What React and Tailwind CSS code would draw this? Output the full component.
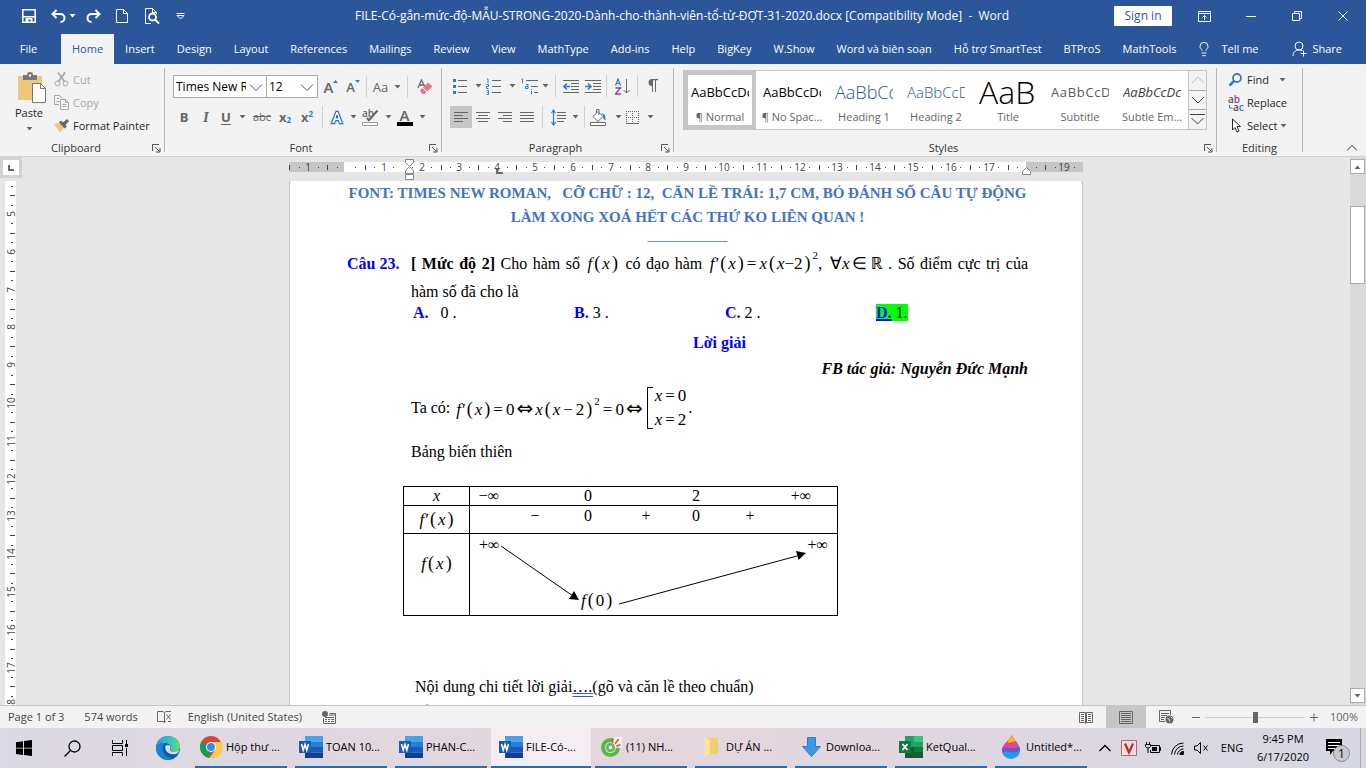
import { Lightbulb } from 'lucide-react';

const TABS = [
  'Home', 'Insert', 'Design', 'Layout', 'References', 'Mailings', 'Review', 'View', 'MathType',
  'Add-ins', 'Help', 'BigKey', 'W.Show', 'Word và biên soạn', 'Hỗ trợ SmartTest', 'BTProS', 'MathTools',
];

const STYLES = [
  { name: '¶ Normal', sample: 'AaBbCcDc', look: 'text-[13px] text-black', active: true },
  { name: '¶ No Spac...', sample: 'AaBbCcDc', look: 'text-[13px] text-black' },
  { name: 'Heading 1', sample: 'AaBbCc', look: 'text-[18px] font-light text-[#2f5496]' },
  { name: 'Heading 2', sample: 'AaBbCcD', look: 'text-[15px] font-light text-[#2f5496]' },
  { name: 'Title', sample: 'AaB', look: 'text-[32px] font-light text-black' },
  { name: 'Subtitle', sample: 'AaBbCcD', look: 'text-[13px] tracking-wider text-[#5a5a5a]' },
  { name: 'Subtle Em...', sample: 'AaBbCcDc', look: 'text-[13px] italic text-[#404040]' },
];

/* ---------- small shared pieces ---------- */

function Caret({ className = '' }) {
  return (
    <svg viewBox="0 0 7 4" className={`w-[7px] h-1 shrink-0 ${className}`} fill="currentColor">
      <path d="M0.5 0h6L3.5 3.5z" />
    </svg>
  );
}

function Svg({ w = 16, h = 16, children, className = '' }) {
  return (
    <svg width={w} height={h} viewBox={`0 0 ${w} ${h}`} fill="none" stroke="currentColor" className={`shrink-0 ${className}`}>
      {children}
    </svg>
  );
}

function IconButton({ label, children, className = 'w-[22px]' }) {
  return (
    <button type="button" aria-label={label} className={`h-[22px] shrink-0 flex items-center justify-center text-[#666] ${className}`}>
      {children}
    </button>
  );
}

function Sep({ className = '' }) {
  return <span className={`w-px h-[22px] shrink-0 bg-[#d0d0d0] ${className}`} />;
}

function Group({ label, launcher = true, className = '', children }) {
  return (
    <section className={`shrink-0 flex ${className}`}>
      <div className="flex-1 min-w-0 flex flex-col">
        <div className="flex-1">{children}</div>
        <div className="h-4 flex items-center text-[#333]">
          <span className="flex-1 text-center">{label}</span>
          {launcher && (
            <button type="button" aria-label={`${label} settings`} className="w-3 text-[#555]">
              <Svg w={9} h={9}>
                <path d="M0.5 7V0.5H7M3 3l4.5 4.5M8 4v4H4" />
              </Svg>
            </button>
          )}
        </div>
      </div>
      <span className="w-px h-[84px] bg-[#b8b8b8]" />
    </section>
  );
}

/* ---------- title bar and tabs ---------- */

function TitleBar() {
  return (
    <header className="h-8 shrink-0 flex items-center text-white text-[12px]">
      <div className="w-[250px] shrink-0 pl-[22px] flex items-center">
        <button type="button" aria-label="Save">
          <Svg w={14} h={14}>
            <path d="M0.8 0.8h12.4v12.4H0.8z" strokeWidth="1.6" />
            <path d="M1 7h12v1.5H1zM3.500 9h7v4.500h-2v-3h-2v3h-3z" fill="currentColor" stroke="none" />
          </Svg>
        </button>
        <button type="button" aria-label="Undo" className="ml-[15px] flex items-center">
          <Svg w={15} h={14}>
            <path d="M5.500 1L1.500 5l4 4M2 5h7.500a4 4 0 0 1 0 8" strokeWidth="2" />
          </Svg>
          <Caret className="ml-[3px]" />
        </button>
        <button type="button" aria-label="Redo" className="ml-2.5">
          <Svg w={15} h={14}>
            <path d="M9.500 1l4 4-4 4M13 5H5.500a4 4 0 0 0 0 8" strokeWidth="2" />
          </Svg>
        </button>
        <button type="button" aria-label="New" className="ml-[15px]">
          <Svg w={12} h={14}>
            <path d="M0.5 0.5h7l4 4v9H0.500zM7.500 0.500v4h4" />
          </Svg>
        </button>
        <button type="button" aria-label="Print preview" className="ml-[17px]">
          <Svg w={15} h={16}>
            <path d="M6 15.500H0.500v-15h7l4 4V6M7.500 0.500v4h4" />
            <circle cx="7.500" cy="9" r="3.500" strokeWidth="1.800" />
            <path d="M10 11.500l4 4" strokeWidth="2" />
          </Svg>
        </button>
        <button type="button" aria-label="Customize toolbar" className="ml-4">
          <Svg w={9} h={8}>
            <path d="M0.500 1.500h8" />
            <path d="M1 3.500h7L4.500 7z" />
          </Svg>
        </button>
      </div>
      <h1 className="flex-1 min-w-0 text-center whitespace-pre">
        FILE-Có-gắn-mức-độ-MẪU-STRONG-2020-Dành-cho-thành-viên-tổ-từ-ĐỢT-31-2020.docx [Compatibility Mode]  -  Word
      </h1>
      <div className="w-[252px] shrink-0 flex items-center">
        <button type="button" className="w-[58px] h-5 shrink-0 rounded-[1px] bg-white text-[#2b579a]">Sign in</button>
        <button type="button" aria-label="Ribbon display options" className="ml-[26px]">
          <Svg w={13} h={11}>
            <path d="M0.500 0.500h12v10H0.500zM0.500 2.500h12M6.500 9V4.500M4.500 6.500l2-2 2 2" />
          </Svg>
        </button>
        <button type="button" aria-label="Minimize" className="ml-[35px]">
          <Svg w={10} h={10}><path d="M0 5.500h10" /></Svg>
        </button>
        <button type="button" aria-label="Restore" className="ml-9">
          <Svg w={10} h={10}><path d="M0.500 2.500h7v7h-7zM2.500 2.500v-2h7v7h-2" /></Svg>
        </button>
        <button type="button" aria-label="Close" className="ml-9">
          <Svg w={10} h={10}><path d="M0.500 0.500l9 9M9.500 0.500l-9 9" /></Svg>
        </button>
      </div>
    </header>
  );
}

function TabStrip() {
  return (
    <nav className="h-8 pt-0.5 shrink-0 flex items-stretch text-white whitespace-nowrap">
      <button type="button" className="w-[61px] pr-1 shrink-0">File</button>
      {TABS.map((t, i) => (
        <button key={t} type="button" className={`shrink-0 px-[11px] ${i === 0 ? 'bg-[#f3f3f3] text-[#2b579a]' : ''}`}>
          {t}
        </button>
      ))}
      <button type="button" className="pl-2 flex items-center gap-2.5">
        <Lightbulb className="w-4 h-[18px]" strokeWidth={1.4} />
        Tell me
      </button>
      <button type="button" className="ml-auto pr-6 flex items-center gap-1">
        <Svg w={16} h={16}>
          <circle cx="7" cy="5" r="4" />
          <path d="M1 15c0-4 2.500-6 6-6 1.500 0 2.500 0.300 3.500 1M11.500 9.500v6M8.500 12.500h6" />
        </Svg>
        Share
      </button>
    </nav>
  );
}

/* ---------- ribbon ---------- */

function ClipboardGroup() {
  return (
    <Group label="Clipboard" className="w-[165px]">
      <div className="flex">
        <button type="button" className="w-[38px] ml-2.5 mt-1 flex flex-col items-center">
          <Svg w={29} h={31} className="ml-1">
            <path d="M1 4h24v24H1z" fill="#eec77c" stroke="none" />
            <path d="M6 3h4a3 3 0 0 1 6 0h4v5H6z" fill="#777" stroke="none" />
            <circle cx="13" cy="3.500" r="1.200" fill="#f3f3f3" stroke="none" />
            <path d="M15.500 11.500h8l5 5v14h-13z" fill="#fff" stroke="#777" />
            <path d="M23.500 11.500v5h5" stroke="#777" />
          </Svg>
          <span className="leading-5">Paste</span>
          <Caret className="mt-1 text-[#666]" />
        </button>
        <div className="ml-1.5 flex flex-col">
          <button type="button" className="h-[23px] flex items-center gap-1 text-[#a8a8a8]">
            <Svg w={15} h={15}>
              <path d="M4 0.500l6.500 9M11 0.500l-6.500 9" strokeWidth="1.800" />
              <circle cx="3.500" cy="11.500" r="2.500" />
              <circle cx="11.500" cy="11.500" r="2.500" />
            </Svg>
            Cut
          </button>
          <button type="button" className="h-[23px] flex items-center gap-1 text-[#a8a8a8]">
            <Svg w={15} h={15}>
              <path d="M5 9.500H0.500v-9h5l3 3M2.500 3.500h3M2.500 6.500h3" />
              <path d="M6.500 4.500h5l3 3v7h-8zM11.500 4.500v3h3M8.500 9.500h4M8.500 11.500h4" />
            </Svg>
            Copy
          </button>
          <button type="button" className="h-[23px] flex items-center gap-1 whitespace-nowrap">
            <Svg w={15} h={15}>
              <path d="M0 6l5-1 5 5-4 4.500z" fill="#eec77c" stroke="none" />
              <path d="M5 4.500l2-2 2 2 4-3.500 2 2-3.500 4 1.500 1.500-2.500 2z" fill="#666" stroke="none" />
            </Svg>
            Format Painter
          </button>
        </div>
      </div>
    </Group>
  );
}

function ComboBox({ label, value, className }) {
  return (
    <div className={`relative h-[23px] border border-[#ababab] bg-white text-[12px] ${className}`}>
      <select aria-label={label} defaultValue={value} className="w-full h-full pl-0.5 pr-5 appearance-none text-black text-clip">
        <option>{value}</option>
      </select>
      <svg viewBox="0 0 14 8" className="absolute right-[3px] top-2 w-3.5 h-2 pointer-events-none" fill="none" stroke="#555">
        <path d="M1 0.500l6 6 6-6" />
      </svg>
    </div>
  );
}

function FontGroup() {
  return (
    <Group label="Font" className="w-[277px] pl-2">
      <div className="h-[23px] mt-[7px] flex items-center">
        <ComboBox label="Font" value="Times New Roman" className="w-[94px]" />
        <ComboBox label="Font size" value="12" className="w-[52px] -ml-px" />
        <IconButton label="Grow font" className="w-[22px] ml-0.5">
          <span className="text-[15px] font-semibold">A</span>
          <Svg w={5} h={16}><path d="M0 4h5L2.500 1z" fill="#2b7cd3" stroke="none" /></Svg>
        </IconButton>
        <IconButton label="Shrink font" className="w-[22px]">
          <span className="text-[13px] font-semibold">A</span>
          <Svg w={5} h={16}><path d="M0 1h5L2.500 4z" fill="#2b7cd3" stroke="none" /></Svg>
        </IconButton>
        <Sep className="ml-0.5" />
        <IconButton label="Change case" className="w-10 gap-1.5 text-[13px]">Aa<Caret /></IconButton>
        <Sep />
        <IconButton label="Clear formatting" className="w-[22px] ml-1.5">
          <Svg w={16} h={16}>
            <path d="M1 9l3.500-8L8 8M2.500 6h4" strokeWidth="1.300" />
            <path d="M3 11.500l8-8 4.500 4-8 7.500H5z" fill="#e8788a" stroke="none" />
            <path d="M5.500 8.500l4.500 4.500" stroke="#fff" />
          </Svg>
        </IconButton>
      </div>
      <div className="h-[22px] mt-2 flex items-center text-[13px]">
        <IconButton label="Bold"><b>B</b></IconButton>
        <IconButton label="Italic"><i className="font-['Liberation_Serif',serif] text-[15px] font-bold">I</i></IconButton>
        <IconButton label="Underline" className="w-[33px] gap-2"><b className="underline underline-offset-2">U</b><Caret /></IconButton>
        <IconButton label="Strikethrough" className="w-6"><s className="text-[11px]">abc</s></IconButton>
        <IconButton label="Subscript"><b>x</b><span className="text-[8px] font-bold text-[#2b7cd3] self-end">2</span></IconButton>
        <IconButton label="Superscript"><b>x</b><span className="text-[8px] font-bold text-[#2b7cd3] self-start">2</span></IconButton>
        <Sep className="mx-1" />
        <IconButton label="Text effects" className="w-8 gap-1.5">
          <Svg w={14} h={15}>
            <path d="M1.500 13.500L6 1.500h2l4.500 12h-3l-1-3h-3l-1 3zM6 8h2L7 5z" stroke="#9cc3eb" strokeWidth="2.600" />
            <path d="M1.500 13.500L6 1.500h2l4.500 12h-3l-1-3h-3l-1 3zM6 8h2L7 5z" fill="#fff" stroke="#2b6cb8" />
          </Svg>
          <Caret />
        </IconButton>
        <IconButton label="Highlight colour" className="w-9 gap-1.5">
          <Svg w={17} h={18} className="overflow-visible">
            <text x="0" y="9" fontSize="10" fontWeight="600" fill="#666" stroke="none">ab</text>
            <path d="M15.500 2.500l-8 9M5 10l2.500 3" strokeWidth="2" />
            <path d="M0.500 14.500h15v3h-15z" fill="#fff" stroke="#999" />
          </Svg>
          <Caret />
        </IconButton>
        <IconButton label="Font colour" className="w-8 gap-1.5">
          <span className="w-4 flex flex-col items-center leading-[14px] text-[15px] font-semibold border-b-4 border-black">A</span>
          <Caret />
        </IconButton>
      </div>
    </Group>
  );
}

function Lines({ rows }) {
  return (
    <Svg w={14} h={11}>
      {rows.map(([x, w], i) => <path key={i} d={`M${x} ${i * 3 + 0.5}h${w}`} />)}
    </Svg>
  );
}

function ParagraphGroup() {
  return (
    <Group label="Paragraph" className="w-[232px] pl-2">
      <div className="h-[22px] mt-[7px] flex items-center">
        <IconButton label="Bullets" className="w-[34px] gap-2">
          <Svg w={14} h={16}>
            <path d="M5 2.500h9M5 8.500h9M5 14.500h9" />
            <path d="M0 1h3v3H0zM0 7h3v3H0zM0 13h3v3H0z" fill="#2b7cd3" stroke="none" />
          </Svg>
          <Caret />
        </IconButton>
        <IconButton label="Numbering" className="w-[34px] gap-2">
          <Svg w={15} h={17}>
            <path d="M6 2.500h9M6 8.500h9M6 14.500h9" />
            <path d="M1 1h1v4M0.500 6.500h2v2h-2v2h2M0.500 12.500h2v4h-2M1 14.500h1.500" stroke="#2b7cd3" />
          </Svg>
          <Caret />
        </IconButton>
        <IconButton label="Multilevel list" className="w-[33px] gap-1">
          <Svg w={17} h={17}>
            <path d="M5 2.500h12M10 8.500h7M13 14.500h4" />
            <path d="M0.500 1h1v4M5 6.500h2v4H4.500v-2H7M10.500 13v3.500M10.500 11v1" stroke="#2b7cd3" />
          </Svg>
          <Caret />
        </IconButton>
        <Sep className="mx-1" />
        <IconButton label="Decrease indent">
          <Svg w={16} h={13}>
            <path d="M0 0.500h16M8 3.500h8M8 6.500h8M8 9.500h8M0 12.500h16" />
            <path d="M7 6.500H1M4 3.500l-3 3 3 3" stroke="#2b7cd3" strokeWidth="1.600" />
          </Svg>
        </IconButton>
        <IconButton label="Increase indent">
          <Svg w={16} h={13}>
            <path d="M0 0.500h16M8 3.500h8M8 6.500h8M8 9.500h8M0 12.500h16" />
            <path d="M0 6.500h6M3 3.500l3 3-3 3" stroke="#2b7cd3" strokeWidth="1.600" />
          </Svg>
        </IconButton>
        <Sep className="ml-0.5 mr-1" />
        <IconButton label="Sort">
          <Svg w={15} h={17}>
            <path d="M0.500 7.500L3 1l2.500 6.500M1.500 5.500h3" stroke="#2b7cd3" strokeWidth="1.200" />
            <path d="M0.500 10h5l-5 6h5.500" stroke="#8a3fb0" strokeWidth="1.300" />
            <path d="M11.500 1v14M8.500 12l3 3 3-3" />
          </Svg>
        </IconButton>
        <Sep className="mx-1" />
        <IconButton label="Show paragraph marks">
          <Svg w={12} h={14}>
            <path d="M5 0h6v1.200H5zM5 0v7a3.500 3.500 0 0 1 0-7z" fill="currentColor" stroke="none" />
            <path d="M5.500 0v13M8.500 0v13" />
          </Svg>
        </IconButton>
      </div>
      <div className="h-[22px] mt-[9px] flex items-center">
        <IconButton label="Align left" className="w-[22px] bg-[#c6c6c6]"><Lines rows={[[0, 14], [0, 9], [0, 14], [0, 9]]} /></IconButton>
        <IconButton label="Center"><Lines rows={[[0, 14], [2, 10], [0, 14], [2, 10]]} /></IconButton>
        <IconButton label="Align right"><Lines rows={[[0, 14], [5, 9], [0, 14], [5, 9]]} /></IconButton>
        <IconButton label="Justify"><Lines rows={[[0, 14], [0, 14], [0, 14], [0, 14]]} /></IconButton>
        <Sep className="mx-1" />
        <IconButton label="Line spacing" className="w-9 gap-1.5">
          <Svg w={15} h={17}>
            <path d="M6 3.500h9M6 6.500h9M6 9.500h9M6 12.500h7" />
            <path d="M2.500 1v15M0.500 4l2-3 2 3M0.500 13l2 3 2-3" stroke="#2b7cd3" strokeWidth="1.200" />
          </Svg>
          <Caret />
        </IconButton>
        <Sep className="ml-px mr-1" />
        <IconButton label="Shading" className="w-[34px] gap-2">
          <Svg w={17} h={17}>
            <path d="M3 7.500l5-5 5 5-5 5zM6.500 4V0.500h2.500V6" fill="#fff" />
            <path d="M12 4c3 1 3.500 3 3.500 7-2 0-2.500-2-2.500-4z" fill="#2b7cd3" stroke="none" />
            <path d="M0.500 13.500h15v3h-15z" fill="#fff" />
          </Svg>
          <Caret />
        </IconButton>
        <IconButton label="Borders" className="w-[34px] gap-2">
          <Svg w={13} h={13}>
            <path d="M0.500 0v12M6.500 0v12M12.500 0v12M0 0.500h13M0 6.500h13" strokeDasharray="1 1" />
            <path d="M0 12.500h13" />
          </Svg>
          <Caret />
        </IconButton>
      </div>
    </Group>
  );
}

function StylesGroup() {
  return (
    <Group label="Styles" className="w-[543px] pl-[9px]">
      <div className="h-[60px] w-[524px] mt-0.5 flex border border-[#c6c6c6] bg-white">
        {STYLES.map((s) => (
          <button
            key={s.name}
            type="button"
            className={`w-[72px] shrink-0 px-[3px] flex flex-col border-4 ${s.active ? 'border-[#c6c6c6]' : 'border-transparent'}`}
          >
            <span className={`h-[34px] w-full overflow-hidden flex items-center whitespace-nowrap ${s.look}`}>
              {s.sample}
            </span>
            <span className="-mx-2 self-stretch text-center leading-4 text-[#666] whitespace-nowrap">{s.name}</span>
          </button>
        ))}
        <div className="flex-1 flex flex-col border-l border-[#c6c6c6] text-[#444]">
          <button type="button" aria-label="Scroll up" className="flex-1 flex items-center justify-center text-[#c0c0c0] bg-[#f3f3f3]">
            <Svg w={14} h={8}><path d="M1 7l6-6 6 6" /></Svg>
          </button>
          <button type="button" aria-label="Scroll down" className="flex-1 flex items-center justify-center bg-[#f3f3f3] border-y border-[#ababab]">
            <Svg w={14} h={8}><path d="M1 1l6 6 6-6" /></Svg>
          </button>
          <button type="button" aria-label="More styles" className="flex-1 flex items-center justify-center bg-[#f3f3f3]">
            <Svg w={15} h={13}><path d="M0 1.500h15M1.500 5l6 6 6-6" /></Svg>
          </button>
        </div>
      </div>
    </Group>
  );
}

function EditingGroup() {
  return (
    <Group label="Editing" launcher={false} className="w-[86px]">
      <div className="pl-[11px] flex flex-col items-start whitespace-nowrap">
        <button type="button" className="h-[23px] flex items-center gap-1">
          <Svg w={15} h={14}>
            <circle cx="9" cy="5" r="4" stroke="#3b78b8" strokeWidth="1.800" />
            <path d="M6 8l-4.500 4.500" stroke="#3b78b8" strokeWidth="2.500" />
          </Svg>
          Find
          <Caret className="ml-1.5 text-[#666]" />
        </button>
        <button type="button" className="h-[23px] flex items-center gap-1">
          <Svg w={15} h={16} className="overflow-visible">
            <text x="0" y="8" fontSize="10" fontWeight="600" fill="#555" stroke="none">a<tspan fill="#8a3fb0">b</tspan></text>
            <text x="5" y="16" fontSize="10" fontWeight="600" fill="#555" stroke="none">a<tspan fill="#2b7cd3">c</tspan></text>
            <path d="M1.500 10v3h3" stroke="#2b7cd3" />
          </Svg>
          Replace
        </button>
        <button type="button" className="h-[23px] flex items-center gap-1">
          <Svg w={15} h={15}>
            <path d="M4.500 1v11l2.500-2.500 2 4.500 2-1-2-4.500h3.500z" fill="#fff" />
          </Svg>
          Select
          <Caret className="-ml-px text-[#666]" />
        </button>
      </div>
    </Group>
  );
}

function Ribbon() {
  return (
    <div className="shrink-0 h-[93px] pt-1 flex bg-[#f3f3f3] border-b border-[#d2d2d2] text-[#262626] overflow-hidden">
      <ClipboardGroup />
      <FontGroup />
      <ParagraphGroup />
      <StylesGroup />
      <EditingGroup />
      <button type="button" aria-label="Collapse ribbon" className="ml-auto mr-2 mb-1 self-end">
        <Svg w={12} h={8}><path d="M1 6.500l5-5 5 5" /></Svg>
      </button>
    </div>
  );
}

/* ---------- rulers ---------- */

const CM = 37.8;

function HorizontalRuler() {
  const marks = [];
  for (let q = -6; q <= 77; q++) {
    const x = Math.round(57 + (q * CM) / 4);
    const n = Math.abs(q / 4);
    if (x > 792 || q === 0 || q === 72 || q === 6) continue;
    if (q % 4 === 0) {
      marks.push(<text key={q} x={x} y="14" textAnchor="middle" fontSize="10" fill="#444" stroke="none">{n}</text>);
    } else {
      marks.push(<path key={q} d={q % 2 === 0 ? `M${x + 0.5} 8v5` : `M${x + 0.5} 10v1`} stroke="#444" />);
    }
  }
  return (
    <Svg w={794} h={24}>
      <path d="M0 5h794v10H0z" fill="#fff" stroke="none" />
      <path d="M0 5h55v10H0zM737 5h57v10h-57z" fill="#c6c6c6" stroke="none" />
      {marks}
      <path d="M208 11v6M208 16h6" stroke="#666" strokeWidth="2" />
      <path d="M116.500 2.500h8v3l-4 4 4 4v3h-8v-3l4-4-4-4zM116.500 17.500h8v5h-8z" fill="#fff" stroke="#888" />
      <path d="M733.500 17.500v-3l4-4 4 4v3z" fill="#fff" stroke="#888" />
    </Svg>
  );
}

function VerticalRuler() {
  const marks = [];
  for (let q = 17; q <= 72; q++) {
    const y = Math.round(33 + ((q - 20) * CM) / 4);
    if (q % 4 === 0) {
      marks.push(
        <text key={q} transform={`translate(10 ${q === 72 ? y - 3 : y}) rotate(-90)`} textAnchor="middle" fontSize="10" fill="#444" stroke="none">
          {q === 72 ? 8 : q / 4}
        </text>
      );
    } else {
      marks.push(<path key={q} d={q % 2 === 0 ? `M5 ${y + 0.5}h5` : `M6 ${y + 0.5}h2`} stroke="#444" />);
    }
  }
  return (
    <div className="w-[11px] ml-[5px] flex-1 min-h-0 overflow-hidden bg-white">
      <Svg w={11} h={524}>{marks}</Svg>
    </div>
  );
}

/* ---------- document ---------- */

function Paren({ children }) {
  return (
    <>
      <span className="text-[18px] not-italic ml-0.5">(</span>
      <span className="mx-0.5">{children}</span>
      <span className="text-[18px] not-italic">)</span>
    </>
  );
}

function Formula({ children, className = '' }) {
  return <span className={`inline-block whitespace-nowrap leading-none italic text-[17px] ${className}`}>{children}</span>;
}

function Op({ children }) {
  return <span className="not-italic mx-[3px]">{children}</span>;
}

function Num({ children }) {
  return <span className="not-italic">{children}</span>;
}

function Iff() {
  return <span className="not-italic mx-0.5 text-[20px] leading-none font-['DejaVu_Sans',sans-serif]">⇔</span>;
}

function Squared() {
  return <sup className="not-italic text-[11px] top-0 ml-0.5 align-[10px]">2</sup>;
}

function Arrows() {
  return (
    <svg viewBox="0 0 367 82" className="absolute left-0 top-0 w-[367px] h-[82px]" fill="none" stroke="#000">
      <path d="M31 12l72 50M149 70l178-48" />
      <path d="M109 66l-10-1 5-8zM336 19l-10-2 2.500 9z" fill="#000" stroke="none" />
    </svg>
  );
}

function VariationTable() {
  const grid = 'grid grid-cols-[38px_54px_52px_64px_36px_72px_30px_1fr] text-center';
  return (
    <table className="ml-14 w-[435px] table-fixed border-collapse text-[16px] leading-[18px]">
      <tbody>
        <tr className="h-[19px]">
          <th className="w-[66px] p-0 border border-black font-normal italic">x</th>
          <td className="p-0 border border-black">
            <div className={grid}>
              <span>−∞</span><span /><span>0</span><span /><span>2</span><span /><span>+∞</span>
            </div>
          </td>
        </tr>
        <tr className="h-7">
          <th className="p-0 border border-black font-normal"><Formula>f′<Paren>x</Paren></Formula></th>
          <td className="p-0 pt-px border border-black align-top">
            <div className={grid}>
              <span /><span>−</span><span>0</span><span>+</span><span>0</span><span>+</span>
            </div>
          </td>
        </tr>
        <tr className="h-[82px]">
          <th className="p-0 pt-5 border border-black font-normal align-top"><Formula>f<Paren>x</Paren></Formula></th>
          <td className="p-0 border border-black">
            <div className="relative h-[81px]">
              <Arrows />
              <span className="absolute left-[9px] top-0.5">+∞</span>
              <span className="absolute right-[9px] top-0.5">+∞</span>
              <span className="absolute left-[111px] top-[57px]"><Formula>f<Paren><Num>0</Num></Paren></Formula></span>
            </div>
          </td>
        </tr>
      </tbody>
    </table>
  );
}

function Answer({ letter, children }) {
  return (
    <span className="whitespace-pre"><b className="text-[#0000ff]">{letter}.</b>{children}</span>
  );
}

function Page() {
  return (
    <article className="flex-1 min-h-0 w-[794px] pl-[57px] pr-[54px] overflow-hidden bg-white border-x border-[#c6c6c6] text-black text-[16px] font-['Liberation_Serif','Noto_Serif',serif]">
      <div className="text-center font-bold text-[#4472c4] text-[15px] leading-6 whitespace-pre">
        <p>FONT: TIMES NEW ROMAN,   CỠ CHỮ : 12,  CĂN LỀ TRÁI: 1,7 CM, BỎ ĐÁNH SỐ CÂU TỰ ĐỘNG</p>
        <p>LÀM XONG XOÁ HẾT CÁC THỨ KO LIÊN QUAN !</p>
        <p className="mb-[5px] text-[10px] leading-4">________________</p>
      </div>

      <div className="flex leading-7">
        <b className="w-16 shrink-0 text-[#0000ff]">Câu 23.</b>
        <p className="text-justify">
          <b>[ Mức độ 2]</b> Cho hàm số <Formula className="mx-0.5">f<Paren>x</Paren></Formula> có đạo hàm{' '}
          <Formula className="mx-0.5">
            f′<Paren>x</Paren><Op>=</Op>x<Paren>x<Num>−2</Num></Paren><Squared /><Num>,</Num>
          </Formula>{' '}
          <Formula><Num>∀</Num>x<Op>∈</Op><Num>ℝ</Num></Formula>&nbsp;. Số điểm cực trị của hàm số đã cho là
        </p>
      </div>
      <div className="pl-[66px] grid grid-cols-[161px_151px_151px_1fr] leading-[14px]">
        <Answer letter="A">{'   0 .'}</Answer>
        <Answer letter="B">{' 3 .'}</Answer>
        <Answer letter="C">{' 2 .'}</Answer>
        <span className="whitespace-pre"><span className="bg-[#00ff00]"><b className="text-[#0000ff] underline decoration-2">D.</b>{' 1.'}</span></span>
      </div>

      <div className="pl-16">
        <p className="mt-[9px] leading-7 text-center font-bold text-[#0000ff]">Lời giải</p>
        <p className="leading-6 text-right font-bold italic">FB tác giả: Nguyễn Đức Mạnh</p>
        <div className="h-[46px] mt-1 flex items-center">
          <span className="mr-1.5">Ta có:</span>
          <Formula>
            f′<Paren>x</Paren><Op>=</Op><Num>0</Num><Iff />x<Paren>x<Op>−</Op><Num>2</Num></Paren><Squared /><Op>=</Op><Num>0</Num><Iff />
          </Formula>
          <span className="w-1.5 h-[42px] ml-0.5 border-l border-y border-black" />
          <span className="ml-0.5 flex flex-col leading-6 italic text-[17px]">
            <span>x<Op>=</Op><Num>0</Num></span>
            <span>x<Op>=</Op><Num>2</Num></span>
          </span>
          <span className="ml-0.5">.</span>
        </div>
        <p className="mt-2 leading-[26px]">Bảng biến thiên</p>
      </div>

      <div className="mt-[21px]"><VariationTable /></div>

      <div className="mt-[58px] pl-[68px] leading-[25px]">
        <p>Nội dung chi tiết lời giải<span className="underline decoration-double decoration-[#2b5fd9]">….(</span>gõ và căn lề theo chuẩn)</p>
        <p>Về</p>
      </div>
    </article>
  );
}

function ScrollBar() {
  return (
    <div className="w-4 shrink-0 pt-0.5 pb-0.5 flex flex-col bg-[#dadada] text-[#666]">
      <button type="button" aria-label="Scroll up" className="w-[15px] h-[15px] flex items-center justify-center bg-white border border-[#ababab]">
        <Caret className="rotate-180" />
      </button>
      <div className="flex-1 pt-8">
        <div className="w-[15px] h-[78px] bg-white border border-[#ababab]" />
      </div>
      <button type="button" aria-label="Scroll down" className="w-[15px] h-[15px] flex items-center justify-center bg-white border border-[#ababab]">
        <Caret />
      </button>
    </div>
  );
}

/* ---------- status bar ---------- */

function StatusBar() {
  return (
    <footer className="h-[23px] shrink-0 pl-2 flex items-center bg-[#f3f3f3] border-t border-[#c6c6c6] text-[#444]">
      <span>Page 1 of 3</span>
      <span className="ml-5">574 words</span>
      <Svg w={15} h={14} className="ml-[19px] text-[#666]">
        <path d="M7.500 12.500V2.500L6 1.500H0.500v10H6l1.500 1 1.500-1M7.500 2.500l1.500-1h5M9.500 4.500l4 5M13.500 4.500l-4 5M14 11.500h-3" />
      </Svg>
      <span className="ml-4">English (United States)</span>
      <Svg w={14} h={13} className="ml-5 text-[#666]">
        <circle cx="3" cy="3" r="3" fill="currentColor" stroke="none" />
        <path d="M1.500 7v5.500h12v-10h-6M3 6.500h9M3 8.500h2M6 8.500h2M9 8.500h3M3 10.500h2M6 10.500h2M9 10.500h3M7 4h6" />
      </Svg>
      <div className="ml-auto h-full flex items-center text-[#666]">
        <button type="button" aria-label="Read mode" className="w-10 flex justify-center">
          <Svg w={14} h={13}>
            <path d="M6.500 12V1.500h-6v10h5l1 1 1-1h6v-10h-6V12M2 3.500h3M2 5.500h3M2 7.500h3M2 9.500h3M9 3.500h3M9 5.500h3M9 7.500h3M9 9.500h3" />
          </Svg>
        </button>
        <button type="button" aria-label="Print layout" className="w-10 h-full flex items-center justify-center bg-[#c6c6c6]">
          <Svg w={14} h={13}><path d="M0.500 0.500h13v12H0.500zM2 2.500h10M2 4.500h10M2 6.500h10M2 8.500h10M2 10.500h10" /></Svg>
        </button>
        <button type="button" aria-label="Web layout" className="w-10 flex justify-center">
          <Svg w={15} h={14}>
            <path d="M6 11.500H0.500v-11h11V5M2 3.500h8M2 5.500h6M2 7.500h4M2 9.500h3" />
            <circle cx="10.500" cy="9.500" r="4" fill="#666" stroke="none" />
            <path d="M8.500 8.500l2 1v2M11.500 6.500l2 2" stroke="#ddd" />
          </Svg>
        </button>
        <button type="button" aria-label="Zoom out" className="ml-0.5 w-4 flex justify-center"><Svg w={8} h={9}><path d="M0 4.500h8" /></Svg></button>
        <input
          type="range"
          aria-label="Zoom"
          defaultValue="50"
          className="w-[100px] h-[11px] mx-px appearance-none bg-linear-to-b from-transparent from-45% via-[#ababab] via-45% to-transparent to-55% [&::-webkit-slider-thumb]:appearance-none [&::-webkit-slider-thumb]:w-[5px] [&::-webkit-slider-thumb]:h-[11px] [&::-webkit-slider-thumb]:bg-[#666]"
        />
        <button type="button" aria-label="Zoom in" className="w-4 flex justify-center"><Svg w={8} h={9}><path d="M0 4.500h8M4 0.500v8" /></Svg></button>
        <span className="w-11 text-center">100%</span>
      </div>
    </footer>
  );
}

/* ---------- taskbar ---------- */

function WordIcon() {
  return (
    <Svg w={24} h={22}>
      <path d="M6 0h18v5.500H6z" fill="#41a5ee" stroke="none" />
      <path d="M6 5.500h18V11H6z" fill="#2b7cd3" stroke="none" />
      <path d="M6 11h18v5.500H6z" fill="#185abd" stroke="none" />
      <path d="M6 16.500h18V22H6z" fill="#103f91" stroke="none" />
      <path d="M0 5h12v12H0z" fill="#185abd" stroke="none" />
      <path d="M2.500 8l1.700 6L6 8.500 7.800 14 9.500 8" stroke="#fff" strokeWidth="1.600" />
    </Svg>
  );
}

function ExcelIcon() {
  return (
    <Svg w={24} h={22}>
      <path d="M6 0h9v11H6z" fill="#21a366" stroke="none" />
      <path d="M15 0h9v6h-9z" fill="#33c481" stroke="none" />
      <path d="M15 6h9v5h-9z" fill="#21a366" stroke="none" />
      <path d="M6 11h18v11H6z" fill="#185c37" stroke="none" />
      <path d="M15 11h9v5h-9z" fill="#107c41" stroke="none" />
      <path d="M0 5h12v12H0z" fill="#107c41" stroke="none" />
      <path d="M3.500 8l5 6M8.500 8l-5 6" stroke="#fff" strokeWidth="1.700" />
    </Svg>
  );
}

function ChromeIcon() {
  return (
    <Svg w={22} h={22}>
      <circle cx="11" cy="11" r="11" fill="#db4437" stroke="none" />
      <path d="M11 11L1.500 5.500A11 11 0 0 0 9.500 21.900z" fill="#0f9d58" stroke="none" />
      <path d="M11 6h9.800A11 11 0 0 1 9.500 21.900L15.300 13.500z" fill="#ffcd40" stroke="none" />
      <path d="M11 11L1.500 5.500 6 13.500l5 3z" fill="#0f9d58" stroke="none" />
      <circle cx="11" cy="11" r="5" fill="#fff" stroke="none" />
      <circle cx="11" cy="11" r="4" fill="#4285f4" stroke="none" />
    </Svg>
  );
}

function EdgeIcon() {
  return (
    <svg viewBox="0 0 24 24" className="w-6 h-6">
      <defs>
        <linearGradient id="edge-top" x1="0" x2="1">
          <stop offset="0" stopColor="#1b9de2" />
          <stop offset="0.600" stopColor="#34c6c0" />
          <stop offset="1" stopColor="#66e05a" />
        </linearGradient>
      </defs>
      <circle cx="12" cy="12" r="12" fill="#0f5ea8" />
      <path d="M0.300 10C1.500 4 6 0 12 0c7 0 12 5 12 10.500 0 3.500-3 5.500-6 5.500-2.500 0-4-1-4-2 0-.6.800-1 .8-2.300C14.800 9 12 7 8.500 7 5 7 1.500 8.500.3 10z" fill="url(#edge-top)" />
      <path d="M0.200 10.500C2 8 5 7 8.500 7c-1 1-2 3-2 6 0 5 4 9 9 9-1 .8-2.500 1.500-4 1.500C5 23.500-.5 18 .2 10.500z" fill="#1683d8" />
      <path d="M9.500 10c1-1.500 3.500-1.500 4.500 0 .8 1.500 0 2.500 0 4 0 1 1.500 2 4 2 2 0 4-.8 5-2l-.6 2.500C20 18.500 17.500 18.500 15 18 11 17 8.500 13.500 9.500 10z" fill="#e5d6de" />
    </svg>
  );
}

function CocCocIcon() {
  return (
    <Svg w={21} h={20}>
      <circle cx="9.500" cy="10.500" r="7.500" stroke="#55b848" strokeWidth="4" />
      <path d="M9.500 10.500L14 0h7v11z" fill="#f6f0f2" stroke="none" />
      <circle cx="9.500" cy="10.500" r="3.200" stroke="#55b848" strokeWidth="2.500" fill="#fff" />
      <path d="M12 6l-1-4.500M14 7l3.500-5M15.500 9.500l4-2" stroke="#e2583e" strokeWidth="1.600" />
    </Svg>
  );
}

function FolderIcon() {
  return (
    <Svg w={15} h={20}>
      <path d="M3 1h11v16H3z" fill="#f3cf6b" stroke="none" />
      <path d="M0.500 0.500L6 3v14l-4 3-1.500-1z" fill="#fbe39b" stroke="none" />
    </Svg>
  );
}

function DownloadIcon() {
  return (
    <Svg w={19} h={20}>
      <path d="M5.500 0.500h8v9h5l-9 10-9-10h5z" fill="#3a96e8" stroke="#2b7fcf" />
    </Svg>
  );
}

function PaintIcon() {
  return (
    <svg viewBox="0 0 18 24" className="w-[18px] h-6">
      <defs>
        <clipPath id="drop"><path d="M9.500 0C11 4 18 9 18 15.500A9 8.500 0 0 1 0 15.500C0 9 8 6 9.500 0z" /></clipPath>
      </defs>
      <g clipPath="url(#drop)">
        <path d="M0 0h18v24H0z" fill="#1aa0f0" />
        <path d="M0 0h18v10L0 17z" fill="#e8468a" />
        <path d="M6 0h8v6L6 8z" fill="#ffb900" />
        <path d="M0 13c6-2 8 3 18-2v5c-8 4-12-2-18 2z" fill="#7a4fd0" />
      </g>
    </svg>
  );
}

const TASKS = [
  { icon: <ChromeIcon />, name: 'Hộp thư ...' },
  { icon: <WordIcon />, name: 'TOAN 10...' },
  { icon: <WordIcon />, name: 'PHAN-C...' },
  { icon: <WordIcon />, name: 'FILE-Có-...', active: true },
  { icon: <CocCocIcon />, name: '(11) NH...' },
  { icon: <FolderIcon />, name: 'DỰ ÁN ...' },
  { icon: <DownloadIcon />, name: 'Downloa...' },
  { icon: <ExcelIcon />, name: 'KetQual...' },
  { icon: <PaintIcon />, name: 'Untitled*...' },
];

function Taskbar() {
  return (
    <div className="h-10 shrink-0 flex items-stretch bg-linear-to-r from-[#dbd9e3] via-[#e5d6dd] to-[#d6d8e4] text-black">
      <button type="button" aria-label="Start" className="w-12 shrink-0 flex items-center justify-center">
        <Svg w={16} h={16}>
          <path d="M0 2.300l7-1v6.400H0zM8 1.100l8-1.100v7.700H8zM0 8.500h7v6.400l-7-1zM8 8.500h8V16l-8-1.100z" fill="#000" stroke="none" />
        </Svg>
      </button>
      <button type="button" aria-label="Search" className="w-12 shrink-0 flex items-center justify-center">
        <Svg w={17} h={17}>
          <circle cx="10.500" cy="6.500" r="5.500" strokeWidth="1.300" />
          <path d="M6.500 10.500L0.500 16.500" strokeWidth="1.300" />
        </Svg>
      </button>
      <button type="button" aria-label="Task view" className="w-12 shrink-0 flex items-center justify-center">
        <Svg w={16} h={16}>
          <path d="M0.500 0v3.500h10V0M0.500 16v-3.500h10V16M0.500 5.500h10v5H0.500zM14.500 0v4M14.500 8v8" />
          <path d="M13 4h3v3h-3z" fill="#000" stroke="none" />
        </Svg>
      </button>
      <button type="button" aria-label="Edge" className="w-[47px] shrink-0 flex items-center justify-center"><EdgeIcon /></button>
      {TASKS.map((t, i) => (
        <button key={i} type="button" className={`w-[100px] flex flex-col ${t.active ? 'bg-[#f4eef2]' : 'px-1'}`}>
          <span className={`flex-1 w-full flex items-center whitespace-nowrap ${t.active ? 'pl-2' : 'pl-1'}`}>
            <span className="w-6 mr-[3px] flex justify-center shrink-0">{t.icon}</span>
            {t.name}
          </span>
          <span className="w-full h-0.5 bg-[#0078d7]" />
        </button>
      ))}
      <div className="ml-auto flex items-center">
        <button type="button" aria-label="Show hidden icons" className="w-6 flex justify-center">
          <Svg w={12} h={8}><path d="M0.500 7L6 1.500 11.500 7" strokeWidth="1.300" /></Svg>
        </button>
        <span className="w-6 flex justify-center">
          <Svg w={16} h={16}>
            <path d="M0.500 0.500h15v15H0.500z" fill="#f6dede" stroke="#b06a6a" />
            <path d="M4 3.500l4 9 4-9" stroke="#c4262e" strokeWidth="2.200" />
          </Svg>
        </span>
        <span className="w-6 flex justify-center">
          <Svg w={16} h={12}>
            <path d="M5 3.500h9.500v7h-9V8M14.500 5.500h1v3h-1M1.500 0v2M4.500 0v2M0.500 2.500h5v2l-1.500 1.500h-2L0.500 4.500zM3 6v5" />
            <path d="M7 5h5v4H7z" fill="#000" stroke="none" />
          </Svg>
        </span>
        <span className="w-6 flex justify-center">
          <Svg w={13} h={13}>
            <path d="M0.500 12.500A12 12 0 0 1 12.500 1M3.500 12.500a9 9 0 0 1 9-8.500M6.500 12.500a6 6 0 0 1 6-5.500" />
            <path d="M9 12.500a3 3 0 0 1 3.500-3v3z" fill="#000" />
          </Svg>
        </span>
        <span className="w-6 flex justify-center">
          <Svg w={15} h={12}>
            <path d="M0.500 4h2.500l3.500-3.500v11L3 8H0.500zM9.500 3.500l4 5M13.500 3.500l-4 5" />
          </Svg>
        </span>
        <span className="w-[38px] text-center">ENG</span>
        <div className="w-[64px] text-center leading-[18px]">
          <p>9:45 PM</p>
          <p>6/17/2020</p>
        </div>
        <button type="button" aria-label="Notifications" className="w-[45px] flex justify-center">
          <Svg w={25} h={24} className="mt-1">
            <path d="M1 1h16v12H8l-3 4v-4H1z" fill="#000" stroke="none" />
            <path d="M3 4.500h12M3 7.500h12M3 10.500h7" stroke="#fff" />
            <circle cx="16.500" cy="15.500" r="8" fill="#c9cad0" stroke="#888" />
            <text x="16.500" y="20" textAnchor="middle" fontSize="12" fill="#000" stroke="none">1</text>
          </Svg>
        </button>
        <span className="w-1.5 h-10 border-l border-[#a9abb5]" />
      </div>
    </div>
  );
}

export default function App() {
  return (
    <div className="h-screen flex flex-col overflow-hidden bg-[#2b579a] text-[11px] leading-4 font-['Open_Sans','Noto_Sans',sans-serif]">
      <TitleBar />
      <TabStrip />
      <Ribbon />
      <main className="flex-1 min-h-0 flex bg-[#e6e6e6]">
        <div className="w-[22px] shrink-0 flex flex-col">
          <div className="h-[21px] mb-[3px] p-[3px] shrink-0 bg-[#d2d2d2]">
            <div className="h-[15px] flex items-center justify-center bg-white text-[#666]">
              <Svg w={6} h={6}><path d="M1 0v5h5" strokeWidth="2" /></Svg>
            </div>
          </div>
          <VerticalRuler />
        </div>
        <div className="flex-1 min-w-0 flex flex-col items-center">
          <HorizontalRuler />
          <Page />
        </div>
        <ScrollBar />
      </main>
      <StatusBar />
      <Taskbar />
    </div>
  );
}
